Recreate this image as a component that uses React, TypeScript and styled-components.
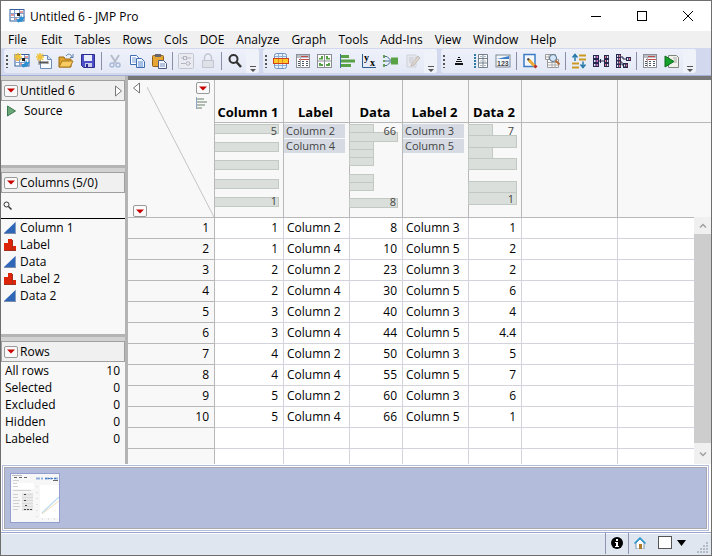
import React from "react";
import styled, { createGlobalStyle, css } from "styled-components";

const Global = createGlobalStyle`
  *, *::before, *::after { box-sizing: border-box; }
  body { margin: 0; font-family: "Open Sans", "Noto Sans", sans-serif; font-size: 12px; color: #000; }
  button, input { font: inherit; color: inherit; }
`;

const buttonReset = css`
  border: 0;
  padding: 0;
  margin: 0;
  background: transparent;
  display: inline-flex;
  align-items: center;
  justify-content: center;
`;

/* ---------- window frame ---------- */

const Window = styled.div`
  height: 100vh;
  display: flex;
  flex-direction: column;
  border: 1px solid #6e6e6e;
  background: #fff;
  overflow: hidden;
`;

const TitleBar = styled.header`
  flex: none;
  height: 30px;
  display: flex;
  align-items: center;
  padding-left: 8px;
  background: #fff;
`;

const Title = styled.h1`
  margin: 0 0 0 5px;
  flex: 1;
  font-size: 12px;
  font-weight: 400;
`;

const WindowButton = styled.button`
  ${buttonReset}
  width: 46px;
  height: 28px;
`;

const MenuBar = styled.nav`
  flex: none;
  height: 17px;
  display: flex;
  background: #f0f0f0;
`;

const MenuItem = styled.button`
  ${buttonReset}
  padding: 0 6px;
  line-height: 17px;
  &:first-child { padding: 0 8px 0 7px; }
`;

/* ---------- toolbars ---------- */

const ToolbarStrip = styled.div`
  flex: none;
  height: 28px;
  display: flex;
  gap: 4px;
  padding: 1px 3px 2px;
  background: #d2d9ee;
  border-bottom: 1px solid #a5aed4;
`;

const ToolGroup = styled.div`
  display: flex;
  align-items: center;
  background: linear-gradient(#eef1fa, #e4e9f6);
  border-radius: 3px;
`;

const Grip = styled.span`
  width: 7px;
  height: 14px;
  background: radial-gradient(circle, #555 1px, transparent 1px) 1px 0 / 4px 4px repeat-y;
`;

const ToolButton = styled.button`
  ${buttonReset}
  width: 22px;
  height: 22px;
`;

const ToolSeparator = styled.span`
  width: 1px;
  height: 18px;
  margin: 0 2px;
  background: #8a8ea6;
`;

const Overflow = styled.button`
  ${buttonReset}
  align-self: stretch;
  align-items: flex-end;
  width: 13px;
  padding-bottom: 1px;
  background: #f0f2fa;
  border-radius: 0 3px 3px 0;
`;

/* ---------- side panels ---------- */

const Workspace = styled.div`
  flex: 1;
  min-height: 0;
  display: flex;
`;

const Sidebar = styled.aside`
  flex: none;
  width: 127px;
  display: flex;
  flex-direction: column;
  background: #f8f8f8;
  border-right: 3px solid #b4b4b4;
`;

const Panel = styled.section<{ $height?: number }>`
  ${(p) => (p.$height ? `height: ${p.$height}px; flex: none;` : "flex: 1;")}
  border-top: 4px solid #d2d2d2;
`;

const Splitter = styled.div`
  flex: none;
  height: 3px;
  background: #b4b4b4;
`;

const PanelHeader = styled.div`
  height: 21px;
  display: flex;
  align-items: center;
  gap: 2px;
  padding: 0 1px 0 2px;
  background: #f0f0f0;
  border: 1px solid #a0a0a0;
`;

const PanelTitle = styled.h2`
  margin: 0;
  flex: 1;
  font-size: 12px;
  font-weight: 400;
  line-height: 17px;
`;

const MenuArrow = styled.button`
  ${buttonReset}
  width: 14px;
  height: 12px;
  background: #fafafa;
  border: 1px solid #999;
  border-radius: 2px;
`;

const PlainButton = styled.button`
  ${buttonReset}
`;

const ScriptButton = styled.button`
  ${buttonReset}
  gap: 7px;
  padding-left: 5px;
  line-height: 19px;
`;

const SearchBox = styled.label`
  display: flex;
  align-items: center;
  gap: 3px;
  height: 26px;
  padding: 0 2px;
  border-bottom: 1px solid #000;
`;

const SearchInput = styled.input`
  flex: 1;
  min-width: 0;
  border: 0;
  outline: 0;
  background: transparent;
`;

const ColumnList = styled.ul`
  list-style: none;
  margin: 0;
  padding: 0 0 0 3px;
`;

const ColumnItem = styled.li`
  display: flex;
  align-items: center;
  gap: 4px;
  height: 17px;
`;

const Counts = styled.dl`
  margin: 0;
  padding: 0 5px 0 4px;
`;

const CountRow = styled.div`
  display: flex;
  justify-content: space-between;
  line-height: 17px;
  dd { margin: 0; }
`;

/* ---------- data grid ---------- */

const GridArea = styled.main`
  flex: 1;
  min-width: 0;
  display: flex;
  background: #fff;
  border-top: 4px solid #777;
  overflow: hidden;
`;

const DataTable = styled.table`
  flex: 1;
  min-width: 0;
  table-layout: fixed;
  border-collapse: separate;
  border-spacing: 0;
  align-self: flex-start;
`;

const Col = styled.col<{ $width?: number }>`
  ${(p) => p.$width && `width: ${p.$width}px;`}
`;

const HeadCell = styled.th`
  height: 43px;
  padding: 0 2px 1px 0;
  vertical-align: bottom;
  font-size: 13px;
  font-weight: 700;
  white-space: nowrap;
  line-height: 18px;
  background: #f8f8f8;
  border-right: 1px solid #b8b8b8;
  border-bottom: 1px solid #b8b8b8;
  &:last-child { border-right: 0; }
`;

const Corner = styled.th`
  position: relative;
  height: 138px;
  padding: 0;
  background: #f8f8f8;
  border-right: 1px solid #b8b8b8;
  border-bottom: 1px solid #b8b8b8;
`;

const CornerLayout = styled.div`
  height: 137px;
  display: flex;
  flex-direction: column;
  justify-content: space-between;
  padding: 2px 4px 0 5px;
`;

const CornerTop = styled.div`
  display: flex;
  justify-content: space-between;
  align-items: flex-start;
`;

const CornerTools = styled.div`
  display: flex;
  flex-direction: column;
  align-items: center;
  gap: 3px;
`;

const Diagonal = styled.svg`
  position: absolute;
  left: 19px;
  top: 7px;
  pointer-events: none;
`;

const SummaryCell = styled.td`
  height: 95px;
  padding: 1px 0 0;
  vertical-align: top;
  background: #f8f8f8;
  border-right: 1px solid #b8b8b8;
  border-bottom: 1px solid #b8b8b8;
  &:last-child { border-right: 0; }
`;

const Levels = styled.div`
  display: flex;
  flex-direction: column;
  gap: 1px;
  margin-right: 4px;
`;

const Level = styled.span`
  height: 14px;
  line-height: 13px;
  padding-left: 2px;
  font-size: 11px;
  color: #444;
  background: #d6dbe3;
`;

const Chart = styled.svg`
  display: block;
  overflow: visible;
  text { font-size: 11px; fill: #444; text-anchor: end; }
  rect { fill: #dadfdb; stroke: #c2c9c3; }
`;

const RowNumber = styled.th`
  height: 21px;
  padding: 0 5px 0 0;
  text-align: right;
  font-weight: 400;
  line-height: 20px;
  background: #f8f8f8;
  border-right: 1px solid #b8b8b8;
  border-bottom: 1px solid #b8b8b8;
`;

const Cell = styled.td<{ $right?: boolean }>`
  height: 21px;
  padding: 0 5px 0 3px;
  text-align: ${(p) => (p.$right ? "right" : "left")};
  line-height: 20px;
  white-space: nowrap;
  border-right: 1px solid #d3d3db;
  border-bottom: 1px solid #d3d3db;
  &:last-child { border-right: 0; }
`;

const ScrollColumn = styled.div`
  flex: none;
  width: 17px;
  display: flex;
  flex-direction: column;
  background: #cdcdcd;
`;

const ScrollHead = styled.div`
  height: 137px;
  background: linear-gradient(#b8b8b8, #b8b8b8) 0 42px / 100% 1px no-repeat #f8f8f8;
`;

const ScrollTrack = styled.div`
  flex: 1;
  display: flex;
  flex-direction: column;
  justify-content: space-between;
`;

const ScrollButton = styled.button`
  ${buttonReset}
  height: 17px;
  background: #f0f0f0;
  &:last-child { height: 21px; padding-bottom: 0; }
`;

/* ---------- bottom ---------- */

const Shelf = styled.section`
  flex: none;
  height: 66px;
  margin: 1px 2px 1px 1px;
  padding: 1px;
  border: 1px solid #b4bcdc;
`;

const ShelfInner = styled.div`
  height: 62px;
  padding: 5px;
  background: #b4bcdc;
  border: 1px solid #a8a8ae;
`;

const ThumbButton = styled.button`
  ${buttonReset}
  width: 50px;
  height: 50px;
  background: #fff;
  border: 1px solid #949fd0;
`;

const StatusBar = styled.footer`
  flex: none;
  height: 23px;
  display: flex;
  align-items: stretch;
  justify-content: flex-end;
  border-top: 1px solid #9aa4ce;
  background: linear-gradient(#fff 1px, #e0e6f0 1px);
`;

const StatusCell = styled.div<{ $wide?: boolean }>`
  display: flex;
  align-items: center;
  gap: ${(p) => (p.$wide ? 5 : 0)}px;
  padding: ${(p) => (p.$wide ? "0 1px 2px 5px" : "0 5px 2px")};
  border-left: 1px solid #8f96b4;
  margin-bottom: 1px;
`;

const Check = styled.input`
  appearance: none;
  width: 14px;
  height: 13px;
  margin: 0 0 0 7px;
  background: #fff;
  border: 1px solid #555;
`;

const SizeGrip = styled.span`
  align-self: flex-end;
  width: 12px;
  height: 12px;
  margin: 0 1px 0 6px;
`;

/* ---------- drawings ---------- */

const RedArrow = () => (
  <svg width="8" height="5" viewBox="0 0 8 5"><path d="M0 .5h8L4 4.5z" fill="#c60000" /></svg>
);

const OverflowIcon = () => (
  <svg width="6" height="6" viewBox="0 0 6 6"><path d="M0 0h6v1H0zM0 3h6L3 6z" fill="#555" /></svg>
);

const GridGlyph = () => (
  <>
    <rect x="1" y="1.5" width="14" height="11.5" fill="#fff" stroke="#34609c" />
    <path d="M1 5.500h14M1 9.500h14M5.500 2v11M10.500 2v11" stroke="#7da0cc" />
    <path d="M2 7h3M6 11h2M11 4h3" stroke="#c33" />
    <path d="M8 5h3v3H8z" fill="#222" />
    <path d="M9 14.500l4-1 3-5-3 1-1-3-1 4-4 1z" fill="#2c8fd0" />
  </>
);

const Star = () => (
  <path d="M4 0v8M0 4h8M1 1l6 6M7 1L1 7" stroke="#eec23a" strokeWidth="1.500" />
);

const green = "#58a245";

const icons: Record<string, React.ReactNode> = {
  table: <GridGlyph />,
  newTable: <><GridGlyph /><Star /></>,
  newScript: (
    <>
      <path d="M4.500 2.500h7l4 4v9h-11z" fill="#f7faff" stroke="#6b8db8" />
      <path d="M11.500 2.500v4h4" fill="#cfe0f4" stroke="#6b8db8" />
      <path d="M3 9.500h9" stroke="#555" strokeWidth="2" />
      <path d="M3 7v5M12 8v3" stroke="#777" />
      <Star />
    </>
  ),
  open: (
    <>
      <path d="M1 14V4h5l1 2h6v8z" fill="#e0a52c" stroke="#9c6a12" />
      <path d="M1 14l3-6h11l-3 6z" fill="#f8cc62" stroke="#a8761b" />
      <path d="M8 3c2-3 5-2 6 1M15 1v3.500h-3" fill="none" stroke="#5a7fae" />
    </>
  ),
  save: (
    <>
      <path d="M1.500 1.500h13v13h-11l-2-2z" fill="#4b50c8" stroke="#2c2c8c" />
      <path d="M4 2h8v6H4z" fill="#e8ecfa" />
      <path d="M5 10h7v4H5z" fill="#c9cdea" />
      <path d="M6 11h2v3H6z" fill="#2c2c8c" />
    </>
  ),
  cut: (
    <>
      <path d="M4 2l5 8M12 2L7 10" stroke="#b7bdcb" strokeWidth="2" />
      <circle cx="5" cy="12" r="2" fill="none" stroke="#a9bad8" strokeWidth="1.500" />
      <circle cx="11" cy="12" r="2" fill="none" stroke="#a9bad8" strokeWidth="1.500" />
    </>
  ),
  copy: (
    <>
      <path d="M1.500 2.500h6l2 2v7h-8z" fill="#fff" stroke="#3f6eb0" />
      <path d="M3 5h4M3 7h4M3 9h4" stroke="#7aa0d6" />
      <path d="M7.500 5.500h5l3 3v6h-8z" fill="#eef5ff" stroke="#3f6eb0" />
      <path d="M9 9h5M9 11h5M9 13h5" stroke="#5c8ace" />
    </>
  ),
  paste: (
    <>
      <rect x="1.500" y="2.500" width="11" height="11" rx="1" fill="#e6a636" stroke="#8e5f14" />
      <rect x="4" y="1" width="6" height="3" fill="#66666c" />
      <path d="M7.500 7.500h5l3 3v5h-8z" fill="#f4f7fd" stroke="#4a5a80" />
      <path d="M9 11h5M9 13h5" stroke="#7690bf" />
    </>
  ),
  settings: (
    <>
      <rect x=".5" y=".5" width="15" height="15" rx="1" fill="#e9ebf1" stroke="#c3c6d1" />
      <path d="M3 5h2M9 5h4M3 10.500h5M12 10.500h1" stroke="#b2b5c1" />
      <rect x="5.500" y="3.500" width="3" height="3" fill="none" stroke="#b2b5c1" />
      <circle cx="10" cy="10.500" r="1.800" fill="none" stroke="#b2b5c1" />
    </>
  ),
  lock: (
    <>
      <path d="M4.500 7V4.500a3.500 3.500 0 017 0V7" fill="none" stroke="#c3c6cf" strokeWidth="1.500" />
      <rect x="2.500" y="7.500" width="11" height="7" fill="#dfe1e8" stroke="#c3c6cf" />
    </>
  ),
  search: (
    <>
      <circle cx="6.500" cy="6" r="4" fill="none" stroke="#333" strokeWidth="2" />
      <path d="M9.500 9l4.500 5" stroke="#333" strokeWidth="2.500" />
    </>
  ),
  highlight: (
    <>
      <rect x="1.500" y=".5" width="12" height="15" rx="2" fill="#eaf1fb" stroke="#6f94c6" />
      <path d="M5.500 1v14M9.500 1v14M2 3.500h11M2 12.500h11" stroke="#8fb0d8" />
      <rect x=".5" y="5.500" width="15" height="5" fill="#ffca28" stroke="#d0401c" />
      <path d="M5.500 6v4M9.500 6v4" stroke="#e8862b" />
    </>
  ),
  report: (
    <>
      <rect x="1.500" y="1.500" width="13" height="13" fill="#fff" stroke="#8c8f96" />
      <path d="M2 3.500h12" stroke="#b9bcc3" strokeWidth="3" />
      <path d="M6 3.500h7M4 6.500h10" stroke="#bd4c4c" />
      <path d="M3 8.500h2M3 10.500h2M3 12.500h2M7 8.500h2M7 10.500h2M7 12.500h2M11 8.500h2M11 10.500h2M11 12.500h2" stroke="#4d5664" />
      <path d="M5.500 5v10" stroke="#aaa" />
    </>
  ),
  quad: (
    <>
      <rect x=".5" y="1.500" width="14" height="13" fill="#fff" stroke="#8a8d92" />
      <path d="M7.500 2v12M1 8h13" stroke="#8a8d92" />
      <path d="M2 6.500V5h2V3h2v3.500zM9 6.500V3h2v2h2v1.500zM2 13v-3h2v1h2v2zM9 13v-2h2v-1h2v3z" fill={green} />
    </>
  ),
  bars: (
    <>
      <path d="M1.500 1v14" stroke="#3d6f9e" />
      <path d="M2 2h8v3H2zM2 6.500h14v3H2zM2 11h10v3H2z" fill={green} />
    </>
  ),
  yx: (
    <>
      <path d="M1.500 1v13.500H15" fill="none" stroke="#2c5c90" />
      <text x="3" y="8" fontFamily="Liberation Serif" fontWeight="700" fontSize="10">y</text>
      <text x="9" y="13" fontFamily="Liberation Serif" fontWeight="700" fontSize="10">x</text>
    </>
  ),
  model: (
    <>
      <path d="M1 3.500h3l4 4M1 8h7M1 12.500h3l4-4" fill="none" stroke="#3f6d8e" />
      <path d="M1 2v3M1 7v2M1 11v3" stroke="#69a055" strokeWidth="2" />
      <rect x="8" y="4.500" width="7" height="7" fill={green} />
    </>
  ),
  note: (
    <>
      <path d="M2 2h9v12H2z" fill="#e7e8ee" stroke="#cfd1d8" />
      <path d="M4 5h5M4 7h4M4 9h3" stroke="#c2c5cf" />
      <path d="M6 13l1-3 6-7 2 2-6 7z" fill="#dcd5ce" stroke="#c3bcb8" />
    </>
  ),
  stack: <path d="M7 4h2v1H7zM6 6h4v1H6zM5 8h6v1H5zM4 10h8v2H4z" fill="#111" />,
  rows: (
    <>
      <path d="M5.500 1.500h9v13h-9z" fill="#fff" stroke="#73808c" />
      <path d="M6 5.500h8M6 10h8M10 2v12" stroke="#73808c" />
      <path d="M2 1v14" stroke="#2d7aa4" strokeWidth="2" strokeDasharray="2 1" />
      <path d="M7 3.500h2M11 3.500h2M7 8h2M11 8h2M7 12.500h2M11 12.500h2" stroke="#a9b6c2" />
    </>
  ),
  digits: (
    <>
      <rect x="1" y="2" width="14" height="12" fill="#f4f8fd" stroke="#7c8796" />
      <path d="M2 6l12-3v3z" fill="#3f7cc8" />
      <text x="2" y="13" fontFamily="Liberation Sans" fontWeight="700" fontSize="7" fill="#444">123</text>
    </>
  ),
  edit: (
    <>
      <rect x="2" y="1.500" width="11" height="12" fill="#f3f8ff" stroke="#3c7cc4" strokeWidth="1.500" />
      <path d="M6.500 6.500l6 6.500" stroke="#e9a936" strokeWidth="3" />
      <path d="M5.500 5.500l1.500 1.500" stroke="#41444a" strokeWidth="2" />
      <path d="M12.500 12.500l2 2" stroke="#b93020" strokeWidth="3" />
    </>
  ),
  find: (
    <>
      <path d="M1.500 1.500h10v5h-10zM3.500 6.500h11v8h-11z" fill="#fff" stroke="#9a9a9a" />
      <path d="M2 4h9M4 9.500h10M4 12h10M5 2v4M8 7v7M11 7v7" stroke="#a8a8a8" />
      <circle cx="9" cy="5" r="3.500" fill="#d2e8fa" stroke="#5a6f85" />
      <path d="M11.500 7.500l4 4" stroke="#b56b36" strokeWidth="2" />
    </>
  ),
  sort: (
    <>
      <path d="M4 8V2M1.500 4.500L4 1.500l2.500 3M12 8.500V14M9.500 11.500l2.500 3 2.500-3" fill="none" stroke="#2879a8" strokeWidth="1.500" />
      <path d="M8 2.500h7M8 6.500h7M1 10.500h7M1 14.500h7" stroke="#cc9a22" strokeWidth="2" />
    </>
  ),
  join: (
    <>
      <path d="M0 2h6v12H0zM11 2h5v12h-5z" fill="#26264e" />
      <path d="M6 8h5M7.500 6v4" fill="none" stroke="#26264e" />
      <path d="M1 4h1.500M1 8h1.500M1 12h1.500" stroke="#dfe1f4" strokeWidth="2" />
      <path d="M3.500 4H5M3.500 8H5M3.500 12H5" stroke="#d97cc8" strokeWidth="2" />
      <path d="M12 4h1.200M12 8h1.200M12 12h1.200" stroke="#e4788a" strokeWidth="2" />
      <path d="M14 4h1.200M14 8h1.200M14 12h1.200" stroke="#dfe1f4" strokeWidth="2" />
    </>
  ),
  split: (
    <>
      <path d="M1 1h5v14H1zM11 4h5v4h-5zM8 10h5v5H8z" fill="#26264e" />
      <path d="M6 4h2v2h3M6 9h1v3h1" fill="none" stroke="#26264e" />
      <path d="M2 3h1.200M2 6h1.200M2 9.500h1.200M2 13h1.200M12 6h1.200M9 12.500h1.200" stroke="#dfe1f4" strokeWidth="2" />
      <path d="M4 3h1.200M4 6h1.200M4 9.500h1.200M4 13h1.200M14 6h1.200M11 12.500h1.200" stroke="#e4788a" strokeWidth="2" />
    </>
  ),
  run: (
    <>
      <path d="M4.500 2.500h8l2 2v10h-10z" fill="#f2f2ec" stroke="#82847e" />
      <path d="M9 5h4M10 7h3M10 9h3" stroke="#aaa" />
      <path d="M1 3l9 5.500L1 14z" fill="#17a02c" stroke="#0c6c1a" />
    </>
  ),
};

const Icon = ({ name }: { name: string }) => (
  <svg width="16" height="16" viewBox="0 0 16 16" aria-hidden="true">{icons[name]}</svg>
);

const ContinuousIcon = () => (
  <svg width="12" height="12" viewBox="0 0 12 12"><path d="M0 11L11.500 0v11z" fill="#2f66b8" /><path d="M0 11.500h12V0" fill="none" stroke="#7d8da8" /></svg>
);

const NominalIcon = () => (
  <svg width="12" height="12" viewBox="0 0 12 12"><path d="M0 4h4v8H0zM4 0h4v12H4zM9 7h3v5H9z" fill="#dc2408" /><path d="M0 11.500h12M8.500 1v11" stroke="#a03020" /></svg>
);

/* ---------- data ---------- */

const menus = ["File", "Edit", "Tables", "Rows", "Cols", "DOE", "Analyze", "Graph", "Tools", "Add-Ins", "View", "Window", "Help"];

const toolGroups: string[][] = [
  ["newTable", "newScript", "open", "save", "|", "cut", "copy", "paste", "|", "settings", "lock", "|", "search"],
  ["highlight", "report", "quad", "bars", "yx", "model", "note"],
  ["stack", "rows", "digits", "|", "edit", "find", "|", "sort", "join", "split", "|", "report", "run"],
];

const columns = [
  { name: "Column 1", numeric: true },
  { name: "Label", numeric: false },
  { name: "Data", numeric: true },
  { name: "Label 2", numeric: false },
  { name: "Data 2", numeric: true },
];

const counts: [string, number][] = [["All rows", 10], ["Selected", 0], ["Excluded", 0], ["Hidden", 0], ["Labeled", 0]];

const widths = [87, 69, 66, 53, 66, 53, 96, undefined];

const rows: (string | number)[][] = [
  [1, "Column 2", 8, "Column 3", 1],
  [1, "Column 4", 10, "Column 5", 2],
  [2, "Column 2", 23, "Column 3", 2],
  [2, "Column 4", 30, "Column 5", 6],
  [3, "Column 2", 40, "Column 3", 4],
  [3, "Column 4", 44, "Column 5", 4.4],
  [4, "Column 2", 50, "Column 3", 5],
  [4, "Column 4", 55, "Column 5", 7],
  [5, "Column 2", 60, "Column 3", 6],
  [5, "Column 4", 66, "Column 5", 1],
];

type Bar = [y: number, width: number, height: number];

const histograms: Record<string, { max: string; min: string; minY: number; right: number; bars: Bar[] }> = {
  "Column 1": { max: "5", min: "1", minY: 81, right: 62, bars: [[0, 64, 9], [18, 64, 9], [36, 64, 9], [55, 64, 9], [73, 64, 9]] },
  Data: { max: "66", min: "8", minY: 82, right: 46, bars: [[0, 24, 8], [8, 48, 9], [17, 24, 8], [25, 24, 8], [33, 24, 8], [50, 24, 8], [58, 24, 8], [74, 48, 9]] },
  "Data 2": { max: "7", min: "1", minY: 79, right: 45, bars: [[0, 24, 11], [11, 48, 12], [23, 24, 11], [34, 48, 11], [57, 48, 11], [68, 48, 12]] },
};

const levels: Record<string, string[]> = {
  Label: ["Column 2", "Column 4"],
  "Label 2": ["Column 3", "Column 5"],
};

const Summary = ({ name }: { name: string }) => {
  const h = histograms[name];
  if (!h) {
    return <Levels>{levels[name].map((l) => <Level key={l}>{l}</Level>)}</Levels>;
  }
  return (
    <Chart width={h.right + 4} height="90">
      {h.bars.map(([y, w, height]) => <rect key={y} x="-.5" y={y + 0.5} width={w} height={height} />)}
      <text x={h.right} y="11">{h.max}</text>
      <text x={h.right} y={h.minY}>{h.min}</text>
    </Chart>
  );
};

const Header = ({ title, expand }: { title: string; expand?: boolean }) => (
  <PanelHeader>
    <MenuArrow aria-label={`${title} menu`}><RedArrow /></MenuArrow>
    <PanelTitle>{title}</PanelTitle>
    {expand && (
      <PlainButton aria-label="Expand">
        <svg width="9" height="12" viewBox="0 0 9 12"><path d="M1.500 1v10l6-5z" fill="#fff" stroke="#777" /></svg>
      </PlainButton>
    )}
  </PanelHeader>
);

export default function App() {
  return (
    <>
      <Global />
      <Window>
        <TitleBar>
          <Icon name="table" />
          <Title>Untitled 6 - JMP Pro</Title>
          <WindowButton aria-label="Minimize">
            <svg width="10" height="10"><path d="M0 5.500h10" stroke="#000" /></svg>
          </WindowButton>
          <WindowButton aria-label="Maximize">
            <svg width="10" height="10"><rect x=".5" y=".5" width="9" height="9" fill="none" stroke="#000" /></svg>
          </WindowButton>
          <WindowButton aria-label="Close">
            <svg width="10" height="10"><path d="M0 0l10 10M10 0L0 10" stroke="#000" /></svg>
          </WindowButton>
        </TitleBar>
        <MenuBar>{menus.map((m) => <MenuItem key={m}>{m}</MenuItem>)}</MenuBar>
        <ToolbarStrip>
          {toolGroups.map((group, g) => (
            <ToolGroup key={g} role="toolbar">
              <Grip />
              {group.map((name, i) =>
                name === "|" ? <ToolSeparator key={i} /> : (
                  <ToolButton key={i} aria-label={name}><Icon name={name} /></ToolButton>
                )
              )}
              <Overflow aria-label="More tools"><OverflowIcon /></Overflow>
            </ToolGroup>
          ))}
        </ToolbarStrip>

        <Workspace>
          <Sidebar>
            <Panel $height={89}>
              <Header title="Untitled 6" expand />
              <ScriptButton>
                <svg width="11" height="12" viewBox="0 0 11 12"><path d="M1.500 1v10L9.500 6z" fill="#6aa878" stroke="#3d7850" /></svg>
                Source
              </ScriptButton>
            </Panel>
            <Splitter />
            <Panel $height={166}>
              <Header title="Columns (5/0)" />
              <SearchBox>
                <svg width="9" height="9" viewBox="0 0 9 9"><circle cx="3.500" cy="3.500" r="2.500" fill="none" stroke="#333" /><path d="M5.500 5.500L8.500 8.500" stroke="#333" strokeWidth="1.500" /></svg>
                <SearchInput aria-label="Search columns" />
              </SearchBox>
              <ColumnList>
                {columns.map((c) => (
                  <ColumnItem key={c.name}>
                    {c.numeric ? <ContinuousIcon /> : <NominalIcon />}
                    {c.name}
                  </ColumnItem>
                ))}
              </ColumnList>
            </Panel>
            <Splitter />
            <Panel>
              <Header title="Rows" />
              <Counts>
                {counts.map(([label, n]) => <CountRow key={label}><dt>{label}</dt><dd>{n}</dd></CountRow>)}
              </Counts>
            </Panel>
          </Sidebar>

          <GridArea>
            <DataTable>
              <colgroup>{widths.map((w, i) => <Col key={i} $width={w} />)}</colgroup>
              <thead>
                <tr>
                  <Corner rowSpan={2}>
                    <CornerLayout>
                      <CornerTop>
                        <PlainButton aria-label="Collapse">
                          <svg width="8" height="12" viewBox="0 0 8 12"><path d="M6.500 1v10l-6-5z" fill="#fff" stroke="#777" /></svg>
                        </PlainButton>
                        <CornerTools>
                          <MenuArrow aria-label="Columns menu"><RedArrow /></MenuArrow>
                          <PlainButton aria-label="Show histograms">
                            <svg width="14" height="12" viewBox="0 0 14 12"><path d="M.5 0v12" stroke="#8fa6c4" /><path d="M1 2h7M1 5h10M1 8h8M1 11h5" stroke="#98a898" strokeWidth="1.500" /></svg>
                          </PlainButton>
                        </CornerTools>
                      </CornerTop>
                      <MenuArrow aria-label="Rows menu"><RedArrow /></MenuArrow>
                    </CornerLayout>
                    <Diagonal width="67" height="130" viewBox="0 0 67 130"><path d="M0 0l67 130" stroke="#c4c4c4" /></Diagonal>
                  </Corner>
                  {columns.map((c) => <HeadCell key={c.name} scope="col">{c.name}</HeadCell>)}
                  <HeadCell /><HeadCell />
                </tr>
                <tr>
                  {columns.map((c) => <SummaryCell key={c.name}><Summary name={c.name} /></SummaryCell>)}
                  <SummaryCell /><SummaryCell />
                </tr>
              </thead>
              <tbody>
                {rows.map((row, r) => (
                  <tr key={r}>
                    <RowNumber scope="row">{r + 1}</RowNumber>
                    {row.map((v, c) => <Cell key={c} $right={columns[c].numeric}>{v}</Cell>)}
                    <Cell /><Cell />
                  </tr>
                ))}
                {[0, 1].map((r) => (
                  <tr key={`blank${r}`}>
                    <RowNumber />
                    {widths.slice(1).map((_, c) => <Cell key={c} />)}
                  </tr>
                ))}
              </tbody>
            </DataTable>
            <ScrollColumn>
              <ScrollHead />
              <ScrollTrack>
                <ScrollButton aria-label="Scroll up">
                  <svg width="8" height="6"><path d="M1 4.500l3-3 3 3" fill="none" stroke="#a0a0a0" strokeWidth="1.500" /></svg>
                </ScrollButton>
                <ScrollButton aria-label="Scroll down">
                  <svg width="8" height="6"><path d="M1 1.500l3 3 3-3" fill="none" stroke="#a0a0a0" strokeWidth="1.500" /></svg>
                </ScrollButton>
              </ScrollTrack>
            </ScrollColumn>
          </GridArea>
        </Workspace>

        <Shelf>
          <ShelfInner>
            <ThumbButton aria-label="Linked report">
              <svg width="48" height="48" viewBox="0 0 48 48">
                <rect width="48" height="48" fill="#f7f7f7" />
                <path d="M1 9h22v6H1zM29 11h19v33H29z" fill="#fff" />
                <path d="M1 1.500h10" stroke="#bbb" />
                <path d="M3 3.500h14" stroke="#666" strokeDasharray="3 2" />
                <path d="M25 4.500h22" stroke="#8fb0dd" strokeWidth="2" strokeDasharray="4 1 2 2" />
                <path d="M34 4.500h11" stroke="#3f74be" strokeDasharray="2 1" />
                <path d="M42 6.500h5" stroke="#666" />
                <path d="M2 6.500h6M2 9.500h4M2 12.500h5M2 16.500h18M2 20.500h5M2 23.500h5M2 26.500h7M2 29.500h6M2 32.500h7M2 35.500h5" stroke="#d0d0d0" />
                <path d="M11 20.500h11M11 23.500h11M11 26.500h11M11 29.500h11M11 32.500h11M11 35.500h11" stroke="#dcdcdc" strokeWidth="2" />
                <path d="M13 20.500h2M13 26.500h2M14 31.500h2M13 35.500h8" stroke="#444" strokeDasharray="2 1" />
                <path d="M31 39L48 23" stroke="#c3dff0" strokeWidth="1.500" />
                <path d="M31 40l17-13" stroke="#f2dfb8" />
                <path d="M26 12v31M31 45h16" stroke="#ccc" strokeDasharray="1 5" />
              </svg>
            </ThumbButton>
          </ShelfInner>
        </Shelf>

        <StatusBar>
          <StatusCell>
            <PlainButton aria-label="Information">
              <svg width="12" height="12" viewBox="0 0 12 12"><circle cx="6" cy="6" r="6" fill="#000" /><path d="M5 2h2v2H5zM4 5h3v4h1v1H4V9h1V6H4z" fill="#fff" /></svg>
            </PlainButton>
          </StatusCell>
          <StatusCell $wide>
            <PlainButton aria-label="Home">
              <svg width="12" height="12" viewBox="0 0 12 12">
                <path d="M2 6v6h8V6L6 2z" fill="#fff" stroke="#7a98b0" />
                <path d="M.5 6.500L6 1l5.500 5.500" fill="none" stroke="#2596cf" strokeWidth="1.500" />
                <path d="M5 7h3v5H5z" fill="#b07a28" />
              </svg>
            </PlainButton>
            <Check type="checkbox" aria-label="Select window" />
            <PlainButton aria-label="Window list">
              <svg width="9" height="6"><path d="M0 0h9L4.500 6z" fill="#000" /></svg>
            </PlainButton>
            <SizeGrip>
              <svg width="12" height="12" viewBox="0 0 12 12"><path d="M9 1h2v2H9zM6 4h2v2H6zM9 4h2v2H9zM3 7h2v2H3zM6 7h2v2H6zM9 7h2v2H9zM0 10h2v2H0zM3 10h2v2H3zM6 10h2v2H6zM9 10h2v2H9z" fill="#b3bac8" /></svg>
            </SizeGrip>
          </StatusCell>
        </StatusBar>
      </Window>
    </>
  );
}
